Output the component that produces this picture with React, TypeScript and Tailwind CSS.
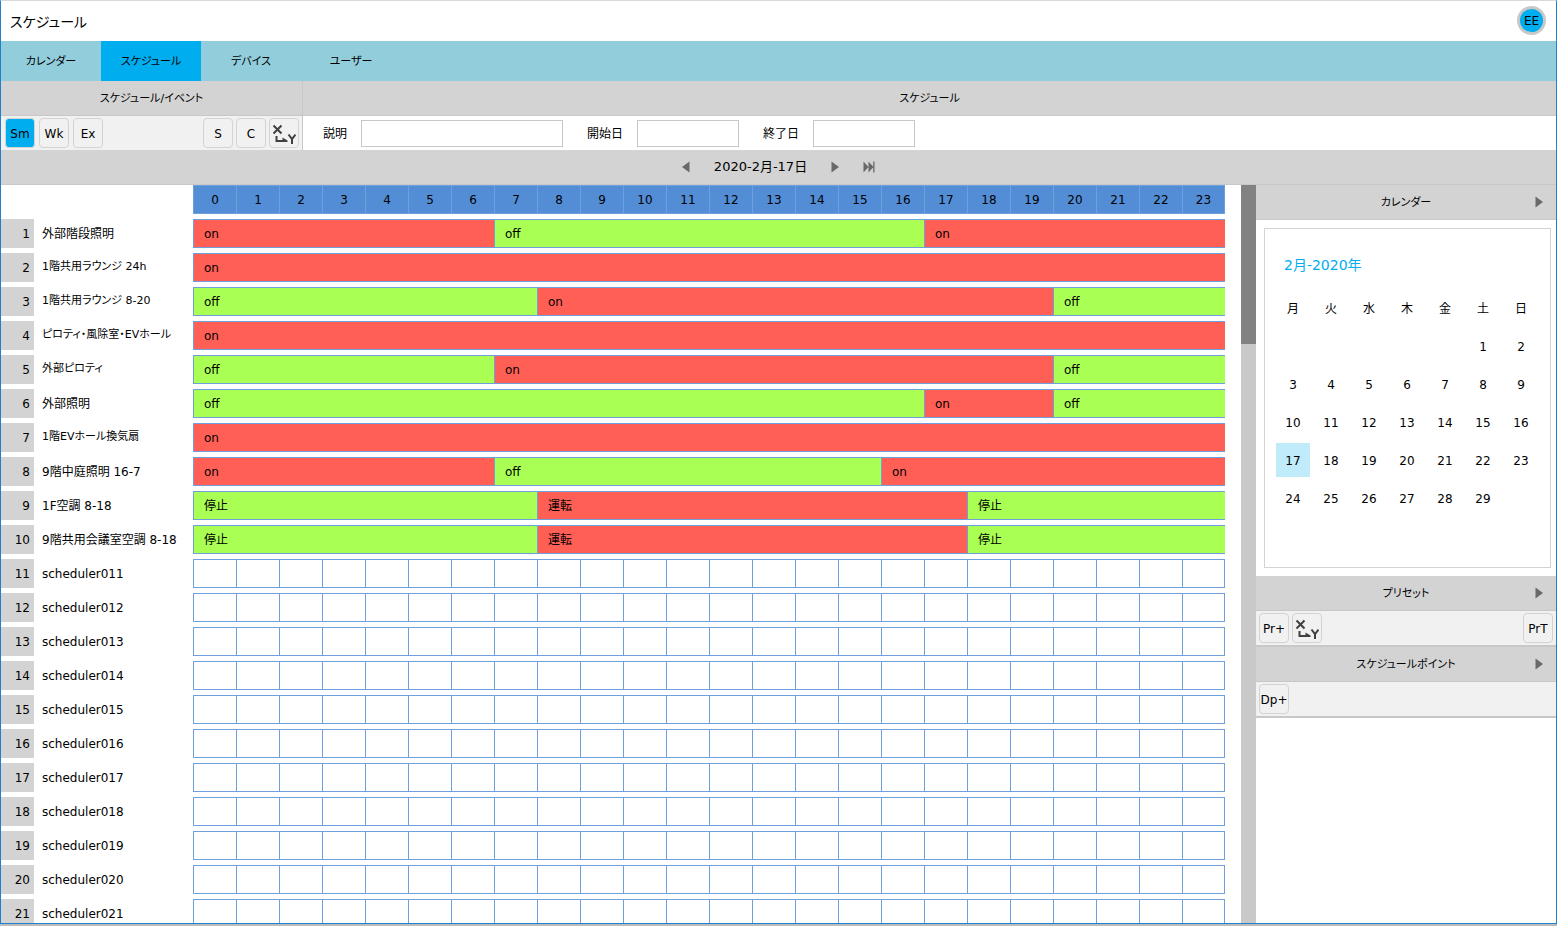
import type { ReactNode } from 'react'

type Segment = { span: number; label: string }
type Row = { name: string; segments?: Segment[] }

const seg = (span: number, label: string): Segment => ({ span, label })

const namedRows: Row[] = [
  { name: '外部階段照明', segments: [seg(7, 'on'), seg(10, 'off'), seg(7, 'on')] },
  { name: '1階共用ラウンジ 24h', segments: [seg(24, 'on')] },
  { name: '1階共用ラウンジ 8-20', segments: [seg(8, 'off'), seg(12, 'on'), seg(4, 'off')] },
  { name: 'ピロティ・風除室・EVホール', segments: [seg(24, 'on')] },
  { name: '外部ピロティ', segments: [seg(7, 'off'), seg(13, 'on'), seg(4, 'off')] },
  { name: '外部照明', segments: [seg(17, 'off'), seg(3, 'on'), seg(4, 'off')] },
  { name: '1階EVホール換気扇', segments: [seg(24, 'on')] },
  { name: '9階中庭照明 16-7', segments: [seg(7, 'on'), seg(9, 'off'), seg(8, 'on')] },
  { name: '1F空調 8-18', segments: [seg(8, '停止'), seg(10, '運転'), seg(6, '停止')] },
  { name: '9階共用会議室空調 8-18', segments: [seg(8, '停止'), seg(10, '運転'), seg(6, '停止')] },
]

const emptyRows: Row[] = Array.from({ length: 11 }, (_, i) => ({ name: `scheduler0${i + 11}` }))
const rows = [...namedRows, ...emptyRows]

const hours = Array.from({ length: 24 }, (_, i) => i)
const tabs = ['カレンダー', 'スケジュール', 'デバイス', 'ユーザー']
const weekdays = ['月', '火', '水', '木', '金', '土', '日']

// February 2020 starts on a Saturday
const weeks = Array.from({ length: 5 }, (_, w) =>
  Array.from({ length: 7 }, (_, d) => {
    const day = w * 7 + d - 4
    return day >= 1 && day <= 29 ? day : null
  })
)

const isActive = (label: string) => label === 'on' || label === '運転'
const hasKatakana = (text: string) => /[ァ-ヺ]/.test(text)

function ToolButton({ label, active, children }: { label: string; active?: boolean; children?: ReactNode }) {
  return (
    <button
      type="button"
      aria-label={label}
      className={`flex size-[30px] shrink-0 items-center justify-center rounded-sm border border-[#d3d3d3] pt-px whitespace-nowrap ${
        active ? 'bg-[#00adef]' : 'bg-[#f1f1f1]'
      }`}
    >
      {children ?? label}
    </button>
  )
}

function XYIcon() {
  return (
    <svg viewBox="0 0 24 20" className="h-5 w-6" fill="none" stroke="#404040" strokeWidth="2">
      <path d="M1.500 1.500l8 8M9.500 1.500l-8 8" />
      <path d="M4.500 12v5H13" />
      <path d="M10.500 13.500l5 3v1.500h-5z" fill="#404040" stroke="none" />
      <path d="M16.500 10.500l3.500 4.500 3.500-4.500M20 14.500V20" />
    </svg>
  )
}

function Triangle({ left }: { left?: boolean }) {
  return (
    <svg viewBox="0 0 8 12" className="h-3 w-2" fill="#696969">
      <path d={left ? 'M7.500 .5v11L0 6z' : 'M.5 .5v11L8 6z'} />
    </svg>
  )
}

function PanelHeader({ title }: { title: string }) {
  return (
    <div className="flex h-[35px] items-center border-b border-[#c8c8c8] bg-[#d3d3d3] pr-[13px] pl-[21px]">
      <h2 className="flex-1 pt-[2px] text-center text-[11px]">{title}</h2>
      <button type="button" aria-label={title}>
        <Triangle />
      </button>
    </div>
  )
}

function Field({ id, label, wide }: { id: string; label: string; wide?: boolean }) {
  return (
    <div className="flex items-center gap-[14px]">
      <label htmlFor={id} className="pt-[2px]">
        {label}
      </label>
      <input
        id={id}
        type="text"
        className={`h-[27px] border border-[#c8c8c8] bg-white px-2 ${wide ? 'w-[202px]' : 'w-[102px]'}`}
      />
    </div>
  )
}

function ScheduleTable() {
  return (
    <table className="w-full table-fixed border-separate border-spacing-0">
      <colgroup>
        <col className="w-[33px]" />
        <col className="w-[159px]" />
        {hours.map((h) => (
          <col key={h} />
        ))}
      </colgroup>
      <thead>
        <tr>
          <td className="p-0" />
          <td className="p-0" />
          {hours.map((h) => (
            <th
              key={h}
              scope="col"
              className="h-[29px] border-y border-l border-[#6f9fdc] bg-[#538dd5] p-0 text-center font-normal last:border-r"
            >
              {h}
            </th>
          ))}
        </tr>
      </thead>
      <tbody>
        {rows.map((row, i) => (
          <tr key={row.name}>
            <td className="p-0 pt-[5px]">
              <div className="flex h-[29px] items-center justify-end bg-[#d3d3d3] pr-1">{i + 1}</div>
            </td>
            <th scope="row" className="p-0 pt-[5px] text-left font-normal">
              <div
                className={`flex h-[29px] items-center pl-2 whitespace-nowrap ${
                  hasKatakana(row.name) ? 'text-[11px]' : ''
                }`}
              >
                {row.name}
              </div>
            </th>
            {row.segments
              ? row.segments.map((s, j) => (
                  <td key={j} colSpan={s.span} className="p-0 pt-[5px]">
                    <div
                      className={`flex h-[29px] items-center border-y border-l border-[#6f9fdc] pl-[10px] ${
                        isActive(s.label) ? 'bg-[#ff5f55]' : 'bg-[#a9ff53]'
                      }`}
                    >
                      {s.label}
                    </div>
                  </td>
                ))
              : hours.map((h) => (
                  <td key={h} className="group p-0 pt-[5px]">
                    <div className="h-[29px] border-y border-l border-[#6f9fdc] bg-white group-last:border-r" />
                  </td>
                ))}
          </tr>
        ))}
      </tbody>
    </table>
  )
}

function MonthCalendar() {
  return (
    <div className="mt-2 mr-[5px] mb-2 ml-2 h-[340px] border border-[#d3d3d3] px-[9px] pt-[26px]">
      <h3 className="pl-[10px] text-sm leading-5 text-[#00adef]">2月-2020年</h3>
      <table className="mt-[14px] border-separate border-spacing-0 text-center">
        <thead>
          <tr>
            {weekdays.map((d) => (
              <th key={d} scope="col" className="size-[38px] p-0 pt-[2px] font-normal">
                {d}
              </th>
            ))}
          </tr>
        </thead>
        <tbody>
          {weeks.map((week, w) => (
            <tr key={w}>
              {week.map((day, d) => (
                <td key={d} className="size-[38px] p-[2px]">
                  {day && (
                    <button type="button" className={`block size-[34px] pt-[2px] ${day === 17 ? 'bg-[#c0ebfb]' : ''}`}>
                      {day}
                    </button>
                  )}
                </td>
              ))}
            </tr>
          ))}
        </tbody>
      </table>
    </div>
  )
}

export default function App() {
  return (
    <div className="h-screen bg-[#bcbcbc] pb-[2px] font-['DejaVu_Sans','Noto_Sans_CJK_JP',sans-serif] text-xs text-black [font-feature-settings:'palt']">
      <div className="flex h-full flex-col overflow-hidden border border-[#1f80d0] border-t-[#d8d8dd] bg-white">
        <header className="flex h-10 shrink-0 items-center justify-between pr-[10px] pb-px pl-[9px]">
          <h1 className="pt-[2px] text-sm">スケジュール</h1>
          <button
            type="button"
            className="flex size-[29px] items-center justify-center rounded-full border-3 border-[#c8c8c8] bg-[#00adef] pt-px"
          >
            EE
          </button>
        </header>

        <nav className="flex h-10 shrink-0 bg-[#92cddb] text-[11px]">
          {tabs.map((tab) => (
            <a
              key={tab}
              href="#"
              className={`flex w-[100px] items-center justify-center pt-[2px] ${
                tab === 'スケジュール' ? 'bg-[#00adef]' : ''
              }`}
            >
              {tab}
            </a>
          ))}
        </nav>

        {/* Filter bar */}
        <div className="flex shrink-0">
          <section className="w-[302px] shrink-0 border-r border-[#c8c8c8]">
            <h2 className="flex h-[35px] items-center justify-center border-b border-[#c8c8c8] bg-[#d3d3d3] pt-[2px] text-[11px]">
              スケジュール/イベント
            </h2>
            <div className="flex h-[34px] items-center justify-between bg-[#f1f1f1] pr-[3px] pl-1">
              <div className="flex gap-1">
                <ToolButton label="Sm" active />
                <ToolButton label="Wk" />
                <ToolButton label="Ex" />
              </div>
              <div className="flex gap-[3px]">
                <ToolButton label="S" />
                <ToolButton label="C" />
                <ToolButton label="XY">
                  <XYIcon />
                </ToolButton>
              </div>
            </div>
          </section>
          <section className="flex-1">
            <h2 className="flex h-[35px] items-center justify-center border-b border-[#c8c8c8] bg-[#d3d3d3] pt-[2px] text-[11px]">
              スケジュール
            </h2>
            <form className="flex h-[34px] items-center gap-6 pl-5">
              <Field id="description" label="説明" wide />
              <Field id="start" label="開始日" />
              <Field id="end" label="終了日" />
            </form>
          </section>
        </div>

        {/* Date navigation */}
        <div className="flex h-[35px] shrink-0 items-center justify-center gap-6 border-b border-[#c8c8c8] bg-[#d3d3d3]">
          <button type="button" aria-label="前日">
            <Triangle left />
          </button>
          <span className="text-[13px]">2020-2月-17日</span>
          <button type="button" aria-label="翌日">
            <Triangle />
          </button>
          <button type="button" aria-label="最後">
            <svg viewBox="0 0 12 12" className="size-3" fill="#696969">
              <path d="M.5 .5l5 5.500-5 5.500zM5.500 .5l5 5.500-5 5.500zM10.200 .5h1.300v11h-1.300z" />
            </svg>
          </button>
        </div>

        <div className="flex min-h-0 flex-1">
          <main className="min-w-0 flex-1 overflow-hidden pr-4">
            <ScheduleTable />
          </main>
          <div className="w-[15px] shrink-0 bg-[#c9c9c9]">
            <div className="h-[159px] bg-[#828282]" />
          </div>
          <aside className="w-[300px] shrink-0 overflow-hidden">
            <PanelHeader title="カレンダー" />
            <MonthCalendar />
            <PanelHeader title="プリセット" />
            <div className="flex h-9 items-center gap-[3px] border-b-2 border-[#c8c8c8] bg-[#f1f1f1] px-[3px]">
              <ToolButton label="Pr+" />
              <ToolButton label="XY">
                <XYIcon />
              </ToolButton>
              <div className="flex-1" />
              <ToolButton label="PrT" />
            </div>
            <PanelHeader title="スケジュールポイント" />
            <div className="flex h-9 items-center border-b-2 border-[#c8c8c8] bg-[#f1f1f1] px-[3px]">
              <ToolButton label="Dp+" />
            </div>
          </aside>
        </div>
      </div>
    </div>
  )
}
